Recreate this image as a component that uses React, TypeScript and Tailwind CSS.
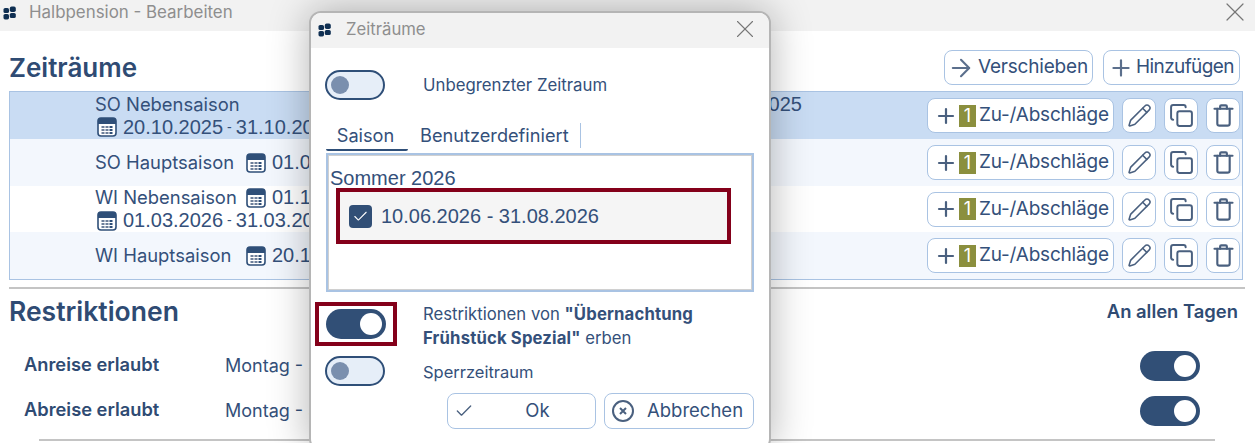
import React from "react";
import { ArrowRight, Plus, Pencil, Copy, X, Check } from "lucide-react";

function Logo() {
  return (
    <svg width="14" height="14" viewBox="0 0 14 14" className="shrink-0">
      <rect x="0.5" y="2" width="5.5" height="5" rx="1.6" fill="#0f2f52" />
      <rect x="6.8" y="0.6" width="6" height="5.4" rx="1.8" fill="#0f2f52" />
      <rect x="0.5" y="8" width="5.5" height="5.4" rx="1.6" fill="#0f2f52" />
      <rect x="6.8" y="7" width="6" height="5" rx="1.6" fill="#0f2f52" />
    </svg>
  );
}

function Cal() {
  return (
    <svg width="20" height="20" viewBox="0 0 20 20" className="shrink-0">
      <rect x="1" y="1" width="18" height="18" rx="3" fill="#fff" stroke="#2f4f78" strokeWidth="1.6" />
      <path d="M1 4a3 3 0 0 1 3-3h12a3 3 0 0 1 3 3v3H1z" fill="#2f4f78" />
      {[4.5, 8.5, 12.5].map((x) =>
        [9, 12, 15].map((y) => (
          <rect key={`${x}-${y}`} x={x} y={y} width="3" height="2" fill={x === 12.5 ? "#2f4f78" : "#6d7f9a"} />
        ))
      )}
    </svg>
  );
}

function Range({ text, className = "" }: { text: string; className?: string }) {
  const [a, b] = text.split("-");
  return (
    <span className={`inline-flex items-center shrink-0 font-['Liberation_Sans',sans-serif] text-[20px] leading-[23px] ${className}`}>
      <Cal />
      <span className="ml-[6px]">{a}</span>
      <span className="mx-[4px] text-[14px]">-</span>
      <span>{b}</span>
    </span>
  );
}

function Toggle({ on = false }: { on?: boolean }) {
  return on ? (
    <div className="w-[60px] h-[30px] rounded-full bg-[#314f76] flex items-center justify-end pr-[4px] shrink-0">
      <div className="w-[22px] h-[22px] rounded-full bg-white" />
    </div>
  ) : (
    <div className="w-[60px] h-[30px] rounded-full bg-[#e6eef8] border-2 border-[#2f4f78] flex items-center pl-[4px] shrink-0">
      <div className="w-[18px] h-[18px] rounded-full bg-[#7a8fae]" />
    </div>
  );
}

function IconBtn({ children }: { children: React.ReactNode }) {
  return (
    <button className="w-[34px] h-[35px] rounded-[8px] bg-white border border-[#a9c3e3] flex items-center justify-center text-[#4a607f]">
      {children}
    </button>
  );
}

function TrashPlain() {
  return (
    <svg width="27" height="27" viewBox="0 0 24 24" fill="none" stroke="currentColor" strokeWidth="1.9" strokeLinejoin="round" strokeLinecap="round" className="shrink-0">
      <path d="M4 6h16" />
      <path d="M9 6V4a1 1 0 0 1 1-1h4a1 1 0 0 1 1 1v2" />
      <path d="M6.5 6v13a2 2 0 0 0 2 2h7a2 2 0 0 0 2-2V6" />
    </svg>
  );
}

function Actions() {
  return (
    <div className="flex items-center gap-[8px] shrink-0">
      <button className="w-[187px] h-[35px] rounded-[8px] bg-white border border-[#a9c3e3] flex items-center pl-[6px] text-[19px] text-[#34507a]">
        <Plus size={24} strokeWidth={2.2} className="text-[#4a607f] shrink-0" />
        <span className="ml-px w-[17px] h-[22px] bg-[#8b8f3e] text-white text-[18px] leading-[22px] text-center">1</span>
        <span className="ml-[3px] tracking-[-0.2px] whitespace-nowrap">Zu-/Abschläge</span>
      </button>
      <IconBtn><Pencil size={25} strokeWidth={1.5} /></IconBtn>
      <IconBtn><Copy size={25} strokeWidth={1.9} /></IconBtn>
      <IconBtn><TrashPlain /></IconBtn>
    </div>
  );
}

function Row({ bg, h, children }: { bg: string; h: string; children: React.ReactNode }) {
  return (
    <div className={`flex items-center justify-between pl-[85px] pr-[2px] ${h} ${bg}`}>
      <div className="flex flex-col min-w-0 flex-1 text-[18.4px] leading-[23px] text-[#34507a]">{children}</div>
      <Actions />
    </div>
  );
}

export default function App() {
  return (
    <div className="relative w-[1255px] h-[443px] overflow-hidden bg-white font-['Inter',sans-serif] text-[#34507a]">
      <div className="h-[31px] bg-[#f2f2f2] flex items-center pl-[3px] pr-[4px] pb-[5px]">
        <Logo />
        <span className="ml-[12px] text-[16.9px] text-[#8e8e8e] flex-1">Halbpension - Bearbeiten</span>
        <X size={32} strokeWidth={0.9} className="text-[#777] shrink-0 -translate-y-px" />
      </div>

      <div className="flex items-center justify-between pl-[9px] pr-[15px] h-[59px] pt-[14px]">
        <h1 className="text-[26px] font-semibold text-[#2f4b73]">Zeiträume</h1>
        <div className="flex gap-[10px]">
          <button className="w-[149px] h-[35px] rounded-[8px] border border-[#a9c3e3] flex items-center pl-[2px] text-[19px]">
            <ArrowRight size={28} strokeWidth={1.8} className="text-[#5b6f8c] shrink-0" />
            <span className="ml-[3px] tracking-[-0.2px]">Verschieben</span>
          </button>
          <button className="w-[137px] h-[35px] rounded-[8px] border border-[#a9c3e3] flex items-center pl-[4px] text-[19px]">
            <Plus size={26} strokeWidth={2} className="text-[#5b6f8c] shrink-0" />
            <span className="ml-[2px] tracking-[-0.6px] whitespace-nowrap">Hinzufügen</span>
          </button>
        </div>
      </div>

      <div className="mx-[9px] w-[1234px] border border-[#a9c3e3] mt-px">
        <Row bg="bg-[#c9dcf3]" h="h-[47px]">
          <div className="flex items-center whitespace-nowrap">
            <span className="w-[151px]">SO Nebensaison</span>
            <Range text="01.09.2025-30.09.2025" className="ml-[317px]" />
          </div>
          <div className="flex items-center"><Range text="20.10.2025-31.10.2025" className="ml-[2px]" /></div>
        </Row>
        <Row bg="bg-[#f3f7fd]" h="h-[47px]">
          <div className="flex items-center whitespace-nowrap">
            <span className="w-[151px]">SO Hauptsaison</span>
            <Range text="01.07.2026-31.08.2026" />
          </div>
        </Row>
        <Row bg="bg-white" h="h-[46px]">
          <div className="flex items-center whitespace-nowrap">
            <span className="w-[151px]">WI Nebensaison</span>
            <Range text="01.12.2025-19.12.2025" />
          </div>
          <div className="flex items-center"><Range text="01.03.2026-31.03.2026" className="ml-[2px]" /></div>
        </Row>
        <Row bg="bg-[#f3f7fd]" h="h-[47px]">
          <div className="flex items-center whitespace-nowrap">
            <span className="w-[151px]">WI Hauptsaison</span>
            <Range text="20.12.2025-28.02.2026" />
          </div>
        </Row>
      </div>

      <div className="mx-[9px] w-[1236px] h-[2px] bg-[#c4c4c4] mt-[7px]" />

      <div className="flex items-center justify-between pl-[9px] pr-[17px] h-[46px]">
        <h2 className="text-[26.5px] font-semibold text-[#2f4b73]">Restriktionen</h2>
        <span className="text-[18.4px] font-semibold text-[#2f4b73]">An allen Tagen</span>
      </div>

      <div className="mt-[16px] pl-[24px] pr-[55px] flex flex-col gap-[15px]">
        {["Anreise erlaubt", "Abreise erlaubt"].map((t) => (
          <div key={t} className="flex items-center h-[30px]">
            <span className="w-[201px] text-[18.3px] font-semibold text-[#2f4b73] -translate-y-px">{t}</span>
            <span className="flex-1 text-[18px] -translate-y-px">Montag - Sonntag</span>
            <Toggle on />
          </div>
        ))}
      </div>
      <div className="ml-[39px] w-[1176px] h-[2px] bg-[#c4c4c4] mt-[13px]" />

      <div className="absolute left-[309px] top-[11px] w-[462px] h-[440px] rounded-[12px] border-[2px] border-[#b5b5b5] bg-white overflow-hidden shadow-[0_0_40px_rgba(0,0,0,0.3)]">
        <div className="h-[35px] bg-[#f2f2f2] flex items-center pl-[7px] pr-[9px] pb-[2px]">
          <Logo />
          <span className="ml-[14px] text-[16.7px] text-[#8e8e8e] flex-1">Zeiträume</span>
          <X size={30} strokeWidth={0.9} className="text-[#777] shrink-0 -translate-y-px" />
        </div>

        <div className="flex items-center pl-[14px] mt-[22px]">
          <Toggle />
          <span className="ml-[38px] text-[16.8px] translate-y-px">Unbegrenzter Zeitraum</span>
        </div>

        <div className="flex items-end mt-[23px] ml-[15px] h-[28px] text-[18.2px] leading-[24px]">
          <span className="w-[82px] h-[28px] text-center border-b-2 border-[#2f4f78] rounded-b-[2px] pr-[3px]">Saison</span>
          <span className="ml-[12px] h-[28px]">Benutzerdefiniert</span>
          <span className="ml-[11px] w-px h-[25px] bg-[#a9c3e3] mb-[3px]" />
        </div>

        <div className="ml-[15px] mt-[2px] w-[428px] h-[139px] border-[2px] border-double border-[#a9c3e3] outline-1 outline-[#d0d0d0] -outline-offset-3 px-[2px] pt-[12px]">
          <div className="font-['Liberation_Sans',sans-serif] text-[20px] leading-[23px]">Sommer 2026</div>
          <div className="ml-[6px] mt-[-2px] w-[395px] h-[56px] border-[4px] border-[#84001a] bg-[#f5f5f5] flex items-center pl-[9px]">
            <div className="w-[23px] h-[23px] rounded-[4px] bg-[#314f76] flex items-center justify-center">
              <Check size={17} strokeWidth={1.5} className="text-white" />
            </div>
            <span className="ml-[9px] font-['Liberation_Sans',sans-serif] text-[20px]">10.06.2026 - 31.08.2026</span>
          </div>
        </div>

        <div className="flex items-start mt-[10px] ml-[4px]">
          <div className="w-[82px] h-[44px] border-[4px] border-[#84001a] flex items-center justify-center shrink-0">
            <Toggle on />
          </div>
          <p className="ml-[26px] text-[16.7px] leading-[24px]">
            Restriktionen von <b className="font-bold tracking-[0.15px]">"Übernachtung<br />Frühstück Spezial"</b> erben
          </p>
        </div>

        <div className="flex items-center pl-[14px] mt-[6px]">
          <Toggle />
          <span className="ml-[38px] text-[16.5px] translate-y-px">Sperrzeitraum</span>
        </div>

        <div className="flex justify-end gap-[8px] pr-[15px] mt-[7px]">
          <button className="w-[149px] h-[36px] rounded-[8px] border border-[#a9c3e3] flex items-center pl-[6px] text-[18.5px]">
            <Check size={20} strokeWidth={1.6} className="text-[#4a607f]" />
            <span className="flex-1 text-center pl-[6px]">Ok</span>
          </button>
          <button className="w-[150px] h-[36px] rounded-[8px] border border-[#a9c3e3] flex items-center pl-[6px] text-[18.5px]">
            <svg width="24" height="24" viewBox="0 0 24 24" fill="none" stroke="#4a607f" strokeWidth="2">
              <circle cx="12" cy="12" r="10" />
              <path d="M9 9l6 6M15 9l-6 6" />
            </svg>
            <span className="ml-[12px]">Abbrechen</span>
          </button>
        </div>
      </div>
    </div>
  );
}
